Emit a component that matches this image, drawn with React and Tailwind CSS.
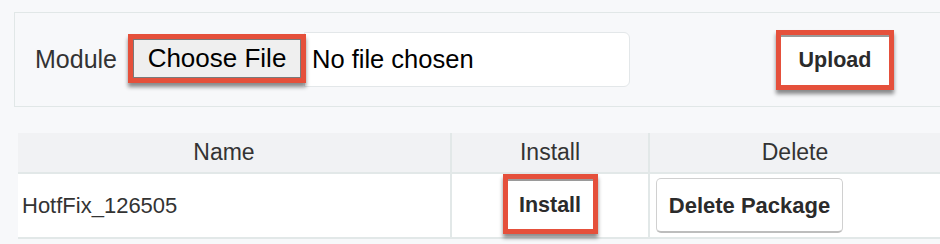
import React from "react";

const font = { fontFamily: '"Liberation Sans", Arial, sans-serif' };

// red highlight frame drawn around the buttons in the screenshot
const Frame = ({ className = "", children }) => (
  <div
    className={`border-[5px] border-[#e5503b] shadow-[0_4px_4px_rgba(0,0,0,0.45)] ${className}`}
  >
    {children}
  </div>
);

const App = () => {
  return (
    <div
      className="w-[940px] h-[244px] overflow-hidden bg-[#f7f8fa] text-[#333]"
      style={font}
    >
      {/* Upload panel */}
      <div className="ml-[14px] mt-[12px] w-[940px] h-[95px] border border-[#e1e7e7] flex items-center pl-[20px]">
        <span className="text-[25px] leading-none">Module</span>

        <div className="flex items-center ml-[11px]">
          <Frame className="relative z-10 w-[178px] h-[49px] -mt-[3px]">
            <div className="w-full h-full bg-[#efefef] border border-[#7a7a7a] flex items-center justify-center text-[26px] text-black">
              Choose File
            </div>
          </Frame>
          <div className="-ml-[2px] w-[326px] h-[55px] bg-white border border-[#e3e7e9] rounded-r-[6px] flex items-center pl-[7px] text-[25.5px] text-black">
            No file chosen
          </div>
        </div>

        <Frame className="ml-[146px] w-[118px] h-[60px]">
          <div className="w-full h-full bg-white border-t-2 border-[#9a9a9a] flex items-center justify-center text-[21.5px] font-bold text-[#2b2b2b]">
            Upload
          </div>
        </Frame>
      </div>

      {/* Package table */}
      <table className="ml-[18px] mt-[26px] w-[930px] border-collapse table-fixed">
        <thead>
          <tr className="bg-[#f1f2f4] h-[40px] text-[23px]">
            <th className="w-[433px] font-normal border-b-2 border-r-2 border-[#e2e8e8] pr-[20px] text-center">
              Name
            </th>
            <th className="w-[198px] font-normal border-b-2 border-r-2 border-[#e2e8e8] text-center">
              Install
            </th>
            <th className="font-normal border-b-2 border-[#e2e8e8] pr-[8px] text-center">
              Delete
            </th>
          </tr>
        </thead>
        <tbody>
          <tr className="bg-white h-[65px]">
            <td className="border-b-2 border-r-2 border-[#e2e8e8] pl-[4px] text-[22px]">
              HotfFix_126505
            </td>
            <td className="border-b-2 border-r-2 border-[#e2e8e8]">
              <div className="flex justify-center">
                <Frame className="w-[95px] h-[60px] -mt-[3px]">
                  <div className="w-full h-full bg-white border-t-2 border-[#9a9a9a] flex items-center justify-center text-[21.5px] font-bold text-[#2b2b2b]">
                    Install
                  </div>
                </Frame>
              </div>
            </td>
            <td className="border-b-2 border-[#e2e8e8] pl-[6px]">
              <button className="w-[187px] h-[55px] bg-white border border-[#d0d0d0] border-b-2 border-b-[#bdbdbd] rounded-[5px] text-[22px] font-bold text-[#2b2b2b]">
                Delete Package
              </button>
            </td>
          </tr>
        </tbody>
      </table>
    </div>
  );
};

export default App;
